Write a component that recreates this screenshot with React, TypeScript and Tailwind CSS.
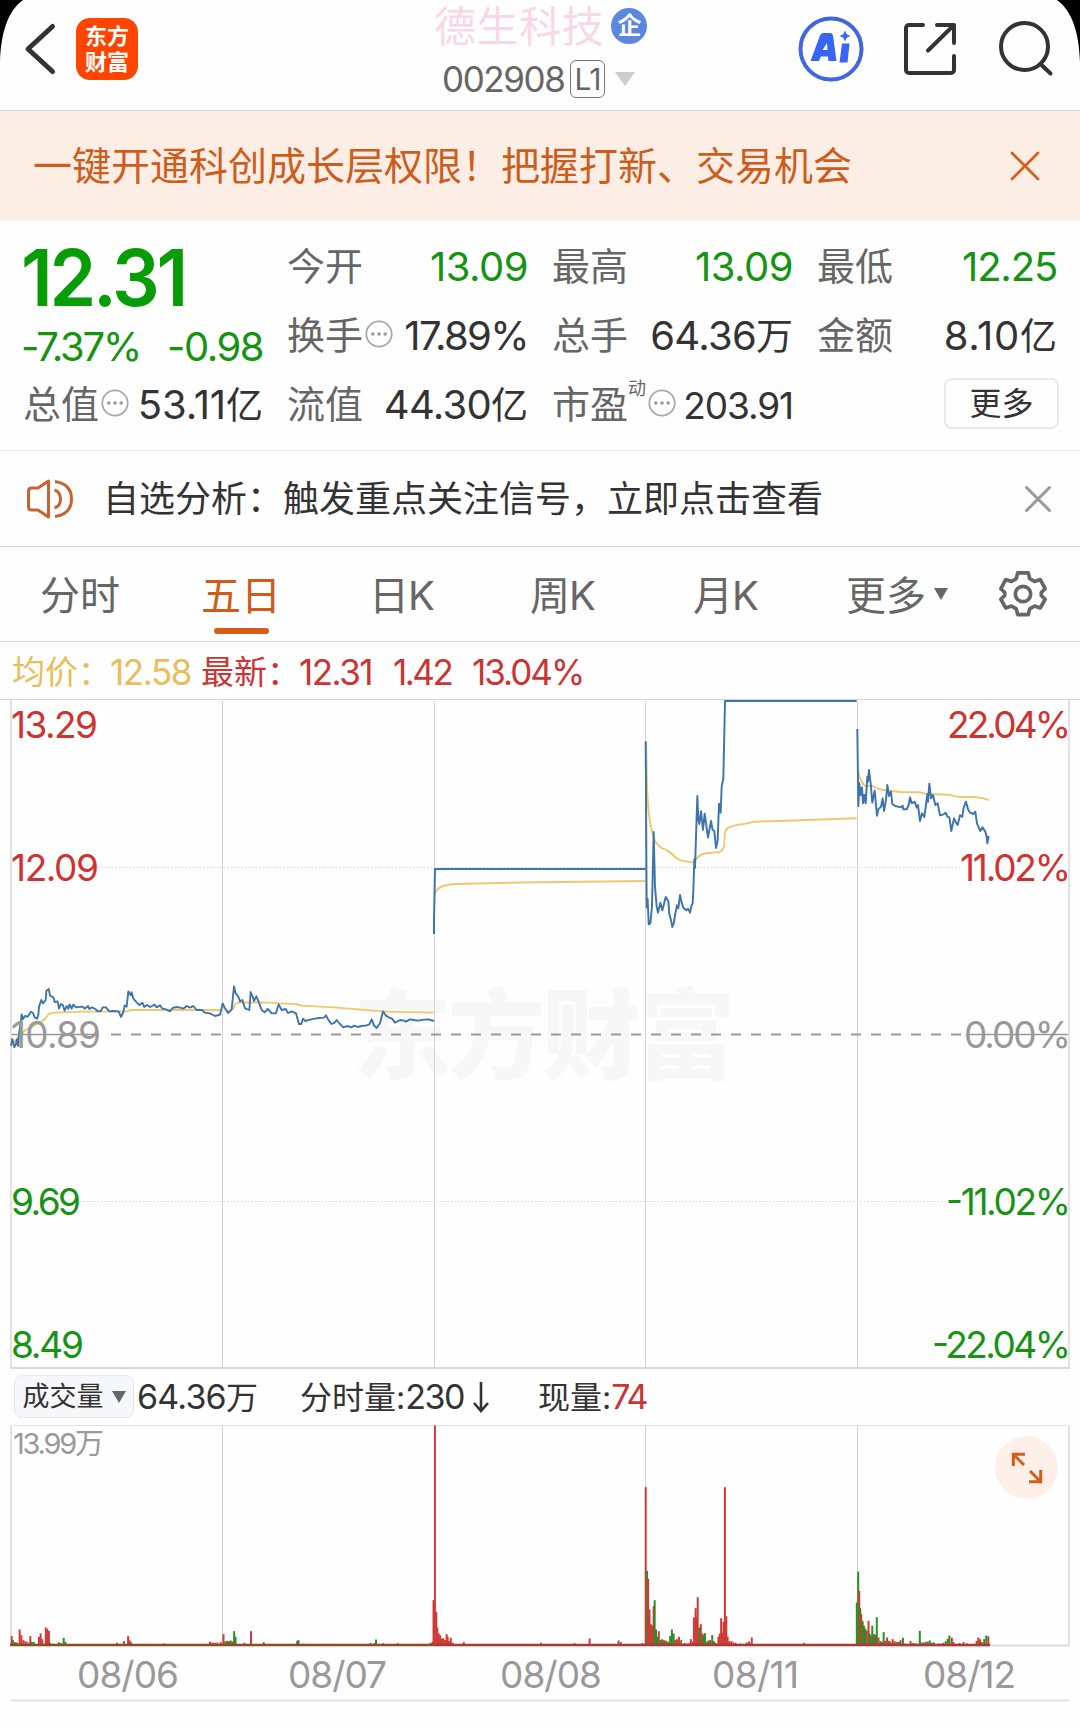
import type { ReactNode } from 'react'

const UP = '#d03230'
const DOWN = '#159312'
const LINE = '#3c74ab'
const AVG = '#f0c76b'

const dayLines = [222.5, 434.5, 645.5, 857.5]

// [x, top, color] in chart units, the baseline sits at 915
type Bar = [number, number, 'r' | 'g']

const volumeLeft: Bar[] = [
  [34, 888, 'r'], [38, 900, 'g'], [44, 906, 'g'], [49, 907, 'g'], [57, 868, 'r'], [62, 885, 'r'], [68, 900, 'r'], [74, 903, 'r'],
  [80, 906, 'r'], [88, 888, 'r'], [92, 905, 'g'], [98, 905, 'g'], [113, 890, 'r'], [118, 880, 'r'], [123, 897, 'r'],
  [133, 862, 'r'], [137, 866, 'r'], [142, 872, 'r'], [146, 908, 'g'], [157, 911, 'g'], [171, 906, 'g'], [178, 909, 'g'],
  [185, 893, 'g'], [190, 905, 'g'], [340, 908, 'r'], [350, 911, 'r'], [360, 903, 'r'], [372, 888, 'r'], [377, 901, 'r'],
  [381, 907, 'r'], [476, 910, 'r'], [610, 905, 'r'], [617, 907, 'r'], [624, 908, 'r'], [631, 907, 'r'], [641, 906, 'r'],
  [649, 882, 'r'], [654, 904, 'g'], [659, 902, 'g'], [665, 903, 'r'], [670, 901, 'g'], [675, 904, 'r'], [680, 873, 'g'],
  [684, 890, 'g'], [710, 908, 'g'], [729, 873, 'r'], [766, 906, 'r'], [863, 902, 'g'], [867, 900, 'g'], [880, 911, 'r'],
  [952, 911, 'g'], [1076, 909, 'r'], [1088, 909, 'g'], [1092, 898, 'g'], [1113, 909, 'r'], [1155, 909, 'r'],
  [1250, 908, 'r'], [1256, 905, 'r'], [1259, 780, 'r'], [1263, 256, 'r'], [1267, 815, 'r'], [1270, 862, 'r'],
  [1274, 880, 'r'], [1278, 885, 'r'], [1283, 895, 'r'], [1287, 894, 'r'], [1292, 900, 'r'], [1297, 882, 'r'],
  [1300, 890, 'r'], [1304, 903, 'r'], [1309, 893, 'r'], [1314, 907, 'r'], [1347, 906, 'r'],
]

const volumeRight: Bar[] = [
  [3, 908, 'r'], [27, 911, 'r'], [100, 909, 'r'], [144, 895, 'r'], [228, 901, 'r'], [235, 906, 'r'], [297, 909, 'r'],
  [307, 441, 'r'], [311, 692, 'g'], [314, 716, 'r'], [318, 808, 'r'], [322, 852, 'r'], [326, 856, 'r'], [330, 798, 'r'],
  [333, 780, 'g'], [337, 868, 'g'], [341, 890, 'g'], [345, 873, 'r'], [350, 900, 'g'], [354, 897, 'g'], [360, 900, 'r'],
  [366, 902, 'r'], [372, 905, 'g'], [378, 888, 'g'], [383, 868, 'g'], [388, 880, 'g'], [393, 900, 'r'], [398, 897, 'r'],
  [404, 890, 'r'], [410, 900, 'g'], [420, 908, 'r'], [431, 909, 'r'], [438, 897, 'r'], [443, 905, 'r'], [447, 832, 'r'],
  [452, 804, 'r'], [455, 830, 'r'], [458, 771, 'r'], [462, 862, 'g'], [467, 852, 'r'], [471, 880, 'r'], [475, 884, 'g'],
  [479, 879, 'g'], [484, 905, 'g'], [489, 901, 'g'], [494, 900, 'r'], [500, 885, 'g'], [505, 903, 'g'], [510, 908, 'r'],
  [518, 890, 'r'], [522, 880, 'r'], [526, 834, 'r'], [530, 878, 'r'], [533, 845, 'r'], [537, 441, 'r'], [541, 828, 'r'],
  [545, 890, 'r'], [550, 903, 'r'], [556, 903, 'r'], [562, 907, 'r'], [568, 908, 'r'], [582, 910, 'r'], [600, 907, 'r'],
  [607, 904, 'r'], [615, 892, 'r'], [767, 908, 'r'],
  [920, 787, 'g'], [924, 694, 'g'], [927, 752, 'r'], [930, 804, 'g'], [933, 822, 'r'], [937, 843, 'g'], [941, 857, 'g'],
  [945, 866, 'g'], [949, 872, 'r'], [954, 842, 'r'], [957, 880, 'g'], [961, 886, 'g'], [965, 857, 'g'], [970, 882, 'r'],
  [974, 884, 'g'], [978, 831, 'g'], [983, 892, 'r'], [988, 903, 'g'], [993, 905, 'r'], [998, 876, 'g'], [1003, 902, 'r'],
  [1008, 892, 'r'], [1013, 902, 'g'], [1018, 905, 'r'], [1024, 897, 'r'], [1030, 903, 'r'], [1036, 905, 'g'],
  [1042, 905, 'g'], [1047, 900, 'r'], [1054, 893, 'g'], [1060, 910, 'r'], [1076, 903, 'r'], [1082, 908, 'g'],
  [1090, 909, 'r'], [1103, 872, 'g'], [1108, 907, 'g'], [1114, 907, 'r'], [1120, 905, 'r'], [1126, 904, 'g'],
  [1132, 901, 'g'], [1138, 908, 'g'], [1144, 907, 'g'], [1158, 910, 'g'], [1170, 908, 'r'], [1178, 903, 'g'],
  [1184, 896, 'g'], [1189, 886, 'g'], [1196, 893, 'r'], [1201, 906, 'r'], [1218, 909, 'r'], [1230, 906, 'r'],
  [1240, 910, 'r'], [1268, 902, 'g'], [1273, 892, 'r'], [1278, 897, 'r'], [1283, 906, 'r'], [1290, 897, 'g'],
  [1296, 886, 'g'], [1302, 889, 'r'],
]

const bars = [
  ...volumeLeft.map(([x, top, c]) => ({ x: x / 2.904, h: (916 - top) / 3, c })),
  ...volumeRight.map(([x, top, c]) => ({ x: 540 + x / 2.904, h: (916 - top) / 3, c })),
]

const scaleLabels = [
  { y: 738, left: '13.29', lw: 87, right: '22.04%', rx: 947, rw: 124, color: UP },
  { y: 881, left: '12.09', lw: 88, right: '11.02%', rx: 960, rw: 111, color: UP },
  { y: 1048, left: '10.89', lw: 90, right: '0.00%', rx: 964, rw: 107, color: '#999' },
  { y: 1215, left: '9.69', lw: 70, right: '-11.02%', rx: 946, rw: 125, color: DOWN },
  { y: 1358, left: '8.49', lw: 73, right: '-22.04%', rx: 932, rw: 139, color: DOWN },
]

const dates = [
  { x: 77, w: 102, label: '08/06' },
  { x: 288, w: 99, label: '08/07' },
  { x: 500, w: 102, label: '08/08' },
  { x: 712, w: 87, label: '08/11' },
  { x: 923, w: 93, label: '08/12' },
]

function Dots() {
  return (
    <svg className="relative -top-0.5 left-0.5 h-7 w-7 shrink-0" viewBox="0 0 28 28">
      <circle cx="14" cy="14" r="12.7" fill="none" stroke="#aaa" strokeWidth="1.8" />
      <circle cx="7.8" cy="14" r="1.8" fill="#999" />
      <circle cx="14" cy="14" r="1.8" fill="#999" />
      <circle cx="20.2" cy="14" r="1.8" fill="#999" />
    </svg>
  )
}

type StatProps = {
  label: ReactNode
  value: ReactNode
  info?: boolean
  className?: string
}

function Stat({ label, value, info, className = 'text-[#333] tracking-[-0.7px]' }: StatProps) {
  return (
    <div className="flex h-[69px] items-center whitespace-nowrap">
      <span className="-mt-0.5 text-[38px] text-[#666]">{label}</span>
      {info && <Dots />}
      <span className={`ml-auto text-[40px] ${className}`}>{value}</span>
    </div>
  )
}

function Unit({ children }: { children: string }) {
  return <span className="text-[37px] tracking-normal">{children}</span>
}

function Header() {
  return (
    <header className="relative flex h-[111px] border-b border-[#d4d4d4]">
      <svg className="ml-[23px] mt-[22px] h-[54px] w-[34px]" viewBox="0 0 34 54" fill="none" stroke="#333" strokeWidth="5" strokeLinecap="round" strokeLinejoin="round">
        <path d="M29.500 4.500L5 27l24.500 22.500" />
      </svg>
      <div className="ml-[19px] mt-[18px] flex h-[62px] w-[62px] flex-col items-center justify-center rounded-[14px] bg-[#ff4500] text-[22px] font-bold leading-[26px] text-white">
        <span>东方</span>
        <span>财富</span>
      </div>
      <div className="ml-[296px] flex w-[240px] flex-col">
        <div className="flex h-[52px] items-center gap-[7px]">
          <span className="whitespace-nowrap pt-0.5 text-[42px] leading-[52px] tracking-[0.6px] text-[#f8d8e8]">德生科技</span>
          <span className="flex h-9 w-9 shrink-0 items-center justify-center rounded-full bg-[#5b87df] text-2xl font-bold text-white">企</span>
        </div>
        <div className="flex h-[54px] items-center pl-2 text-[#666]">
          <span className="w-[122px] text-[35px] tracking-[-1.4px]">002908</span>
          <span className="ml-[6px] flex h-[38px] w-[35px] items-center justify-center rounded-md border border-[#777] text-[30px] tracking-[-1px]">L1</span>
          <svg className="ml-2.5 h-3.5 w-5" viewBox="0 0 20 14">
            <path d="M0 0h20L10 14z" fill="#ccc" />
          </svg>
        </div>
      </div>
      <svg className="ml-[124px] mt-4 h-[66px] w-[66px]" viewBox="0 0 66 66">
        <circle cx="33" cy="33" r="30.500" fill="none" stroke="#4067dc" strokeWidth="4" />
        <path d="M12.500 45L22 19.500q1-2.500 3.500-2.500h7q2 0 2.500 2.500l3.500 25.500h-8l-.6-4.500h-7L21 45zM24.500 34h5l-.5-7z" fill="#3865f6" fillRule="evenodd" />
        <path d="M44 27.500h7.500L49.500 46.500h-8zM47 14.500l1.700 3.800 3.800 1.700-3.800 1.700-1.700 3.800-1.700-3.800-3.800-1.700 3.800-1.700z" fill="#3865f6" />
      </svg>
      <svg className="ml-[38px] mt-5 h-[58px] w-[56px]" viewBox="0 0 56 58" fill="none" stroke="#333" strokeWidth="4" strokeLinecap="round" strokeLinejoin="round">
        <path d="M21 5H7a3 3 0 0 0-3 3v42a3 3 0 0 0 3 3h42a3 3 0 0 0 3-3V36M35 5h17v18M51 6L26 30.500" />
      </svg>
      <svg className="ml-10 mt-5 h-[58px] w-[58px]" viewBox="0 0 58 58" fill="none" stroke="#333" strokeWidth="4" strokeLinecap="round">
        <circle cx="26.500" cy="26.500" r="23.500" />
        <path d="M42.500 44L52.500 53.500" />
      </svg>
      {/* rounded screen corners */}
      <svg className="absolute left-0 top-0 h-16 w-6" viewBox="0 0 24 64">
        <path d="M0 0h23C8 11 1 32 0 62z" />
      </svg>
      <svg className="absolute right-0 top-0 h-16 w-6" viewBox="0 0 24 64">
        <path d="M24 0H1c15 11 22 32 23 62z" />
      </svg>
    </header>
  )
}

function Quote() {
  return (
    <section className="grid h-[230px] grid-cols-[240px_241px_241px_240px] grid-rows-[69px_69px_69px] gap-x-6 border-b border-[#ececec] pl-[23px] pt-[11px]">
      <div className="row-span-2 pt-[5px] text-[#159312]">
        <div className="-ml-0.5 h-[81px] origin-left scale-x-[.95] text-[79px] font-semibold leading-[81px] tracking-[-3.4px] text-[#089c06]">12.31</div>
        <div className="-ml-0.5 flex h-[57px] items-center justify-between text-[40px]">
          <span className="tracking-[-2.200px]">-7.37%</span>
          <span className="tracking-[-1.500px]">-0.98</span>
        </div>
      </div>
      <Stat label="今开" value="13.09" className="tracking-[-0.5px] text-[#159312]" />
      <Stat label="最高" value="13.09" className="tracking-[-0.5px] text-[#159312]" />
      <Stat label="最低" value="12.25" className="tracking-[-1.2px] text-[#159312]" />
      <Stat label="换手" value="17.89%" info className="tracking-[-1.6px] text-[#333]" />
      <Stat label="总手" value={<>64.36<Unit>万</Unit></>} />
      <Stat label="金额" value={<>8.10<Unit>亿</Unit></>} className="tracking-[0.7px] text-[#333]" />
      <Stat label="总值" value={<>53.11<Unit>亿</Unit></>} info className="tracking-[-0.1px] text-[#333]" />
      <Stat label="流值" value={<>44.30<Unit>亿</Unit></>} />
      <Stat
        label={<>市盈<span className="relative -top-[23px] text-[18px]">动</span></>}
        value={<span className="text-[37px]">203.91</span>}
        info
        className="tracking-[-1.1px] text-[#333]"
      />
      <div className="flex items-center justify-end">
        <button className="-mr-0.5 -mt-0.5 h-[51px] w-[115px] rounded-lg border-2 border-[#e9e9e9] text-[32px] text-[#333]">更多</button>
      </div>
    </section>
  )
}

function Notice() {
  return (
    <section className="flex h-24 items-center border-b border-[#d4d4d4]">
      <svg className="ml-[25px] h-[42px] w-[50px]" viewBox="0 0 50 42" fill="none" stroke="#ca6230" strokeWidth="3" strokeLinejoin="round">
        <path d="M23.500 3L13 10H6.500Q3.500 10 3.500 13v16q0 3 3 3H13l10.500 7zM29.500 12q6 2 6 9t-6 9M30 3.500Q46.500 6 46.500 21T30 38.500" />
      </svg>
      <span className="ml-[28px] whitespace-nowrap text-[36px] text-[#333]">自选分析：触发重点关注信号，立即点击查看</span>
      <svg className="ml-auto mr-7 h-7 w-7" viewBox="0 0 28 28" stroke="#999" strokeWidth="3" strokeLinecap="round">
        <path d="M2.500 2.500l23 23M25.500 2.500l-23 23" />
      </svg>
    </section>
  )
}

function Tabs() {
  return (
    <nav className="flex h-[95px] items-center whitespace-nowrap border-b border-[#d4d4d4] text-[40px] text-[#666]">
      <span className="ml-10 w-[161px] pt-[3px]">分时</span>
      <span className="relative w-[168px] pt-[3px] text-[#d05a18]">
        五日
        <span className="absolute left-[13px] top-[55px] h-1.5 w-[55px] rounded-full bg-[#d75c16]" />
      </span>
      <span className="w-[161px] pt-[3px] tracking-[-1px]">日K</span>
      <span className="w-[163px] pt-[3px] tracking-[-1px]">周K</span>
      <span className="w-[153px] pt-[3px] tracking-[-1px]">月K</span>
      <span className="pt-[3px]">更多</span>
      <svg className="ml-2 h-3 w-3.5" viewBox="0 0 14 12">
        <path d="M0 0h14L7 12z" fill="#666" />
      </svg>
      <svg className="ml-[50px] h-[50px] w-[50px]" viewBox="-1 -1 52 52" fill="none" stroke="#666" strokeWidth="3.800" strokeLinejoin="round">
        <path d="M19.500 3h11l1.500 6 5 3 6-2 5 9.500-4 4v3l4 4-5 9-6-2-5 3-1.500 6h-11L18 40.500l-5-3-6 2-5-9 4-4v-3l-4-4L7 10l6 2 5-3z" />
        <circle cx="25" cy="25" r="8" />
      </svg>
    </nav>
  )
}

function PriceChart() {
  return (
    <svg className="block h-[670px] w-full" viewBox="0 699 1080 670" fontFamily="Inter, 'Noto Sans CJK SC', sans-serif">
      <text x="353" y="1071" fontSize="98" fontWeight="900" fill="#f7f7f7" textLength="382">东方财富</text>
      <path d="M0 699.500H1080" stroke="#d4d4d4" />
      <path d="M11 700V1368M1069 700V1368" stroke="#e2e2e2" strokeWidth="2" />
      <path d="M11 1368H1070" stroke="#d8d8d8" strokeWidth="2" />
      {dayLines.map(x => (
        <path key={x} d={`M${x} 701V1368`} stroke="#d2d2d2" />
      ))}
      <path d="M98 867.500H960M80 1201.500H945" stroke="#d5d5d5" strokeDasharray="1.500 2" />

      <g fill="none" strokeLinejoin="round">
        {/* 08/06 and 08/07 */}
        <g transform="translate(0 940) scale(.33333)" strokeWidth="5.600">
          <path stroke={AVG} d="M34 312L48 300 62 282 80 268 100 258 122 246 136 236 146 222 160 218 185 217 250 215 380 214 392 210 660 210M668 200L684 214 700 205 706 192 716 188 800 187 840 190 888 192 905 197 1000 202 1120 212 1160 215 1300 218" />
          <path stroke={LINE} d="M33 318L37 297 40 308 43 322 48 310 51 298 54 318 57 280 61 255 65 223 69 238 75 228 83 230 93 215 99 219 104 232 111 236 115 225 117 200 124 180 129 190 137 180 139 153 146 147 150 167 160 172 164 186 173 184 177 206 183 192 189 196 194 212 200 198 205 206 209 193 215 206 220 194 228 202 248 200 254 206 264 198 268 207 276 202 286 207 292 213 302 214 308 202 318 202 328 214 340 213 356 214 363 231 370 216 374 196 380 200 385 154 392 166 395 157 400 176 410 187 418 195 427 188 433 201 441 195 450 201 464 194 470 202 480 196 486 205 500 209 510 214 518 204 530 201 540 203 550 206 560 198 570 203 580 198 590 210 606 210 614 218 630 220 645 228 660 224 668 190 675 205 684 219 695 209 702 139 707 160 715 170 720 184 727 180 735 205 748 210 752 156 758 170 762 183 769 169 777 188 785 210 794 217 803 207 815 220 828 220 836 193 845 210 857 207 864 219 875 214 888 220 893 238 897 252 904 252 909 236 916 243 930 239 945 236 958 234 972 233 978 226 986 241 994 252 1004 248 1010 240 1020 252 1030 262 1042 258 1055 262 1063 257 1073 261 1085 258 1100 256 1108 253 1115 238 1122 256 1130 264 1140 250 1149 214 1158 227 1166 232 1176 236 1185 248 1200 240 1212 242 1218 245 1230 238 1240 240 1255 242 1272 239 1285 238 1302 243" />
        </g>

        {/* 08/08 */}
        <path stroke={AVG} strokeWidth="1.900" d="M434.500 894C437 888 441 885 455 884L520 882.500 645 881" />
        <path stroke={LINE} strokeWidth="2" d="M434 934V920L435 869H645.500" />

        {/* 08/11 */}
        <g transform="translate(630 690) scale(.33333)" strokeWidth="5.800">
          <path stroke={AVG} d="M48 155L51 290Q55 390 68 430Q72 460 97 475Q115 480 126 492Q140 508 155 512L192 518Q204 493 228 490L268 486Q280 482 283 465Q283 428 288 420Q293 410 325 404Q350 402 370 395L470 392 680 385" />
          <path stroke={LINE} d="M47 154L50 652 53 627 56 703 61 700 66 650 71 426 75 590 80 650 84 668 91 638 97 661 107 621 115 633 118 673 123 690 127 711 132 698 135 675 141 646 145 655 150 615 155 638 160 653 169 661 174 656 180 668 185 645 188 640 190 600 193 508 195 534 202 318 205 390 208 402 213 364 219 420 224 371 234 443 243 393 248 420 253 423 258 474 263 450 267 341 272 368 275 290 280 265 285 33 680 33" />
        </g>

        {/* 08/12 */}
        <g transform="translate(840 690) scale(.33333)" strokeWidth="5.800">
          <path stroke={AVG} d="M53 240Q62 280 76 288L98 288Q110 298 132 300L180 306 240 307 262 312 325 314 350 320 405 321 430 325 446 330" />
          <path stroke={LINE} d="M52 117L55 348 58 280 62 315 66 292 69 340 73 315 77 340 82 260 84 275 87 240 92 280 97 338 104 302 111 377 115 358 123 350 128 325 132 363 138 330 142 285 147 318 153 305 157 342 166 348 182 352 188 347 190 358 200 358 206 345 210 322 215 340 224 335 230 353 234 345 240 393 246 370 253 381 262 313 264 335 268 281 273 325 279 315 286 345 293 340 300 376 311 373 317 368 322 380 328 382 334 423 342 385 348 398 353 405 360 376 367 380 371 353 378 335 384 358 390 368 400 372 406 365 411 400 416 412 421 423 427 412 436 425 440 440 442 460 446 438" />
        </g>
      </g>

      <path d="M111 1034.500H962" stroke="#9a9a9a" strokeWidth="2" strokeDasharray="10 10" />
      <path d="M12 1034.500H98M966 1034.500H1068" stroke="#999" strokeWidth="1.500" />
      {scaleLabels.map(l => (
        <g key={l.left} fontSize="37" fill={l.color}>
          <text x="11" y={l.y} textLength={l.lw}>{l.left}</text>
          <text x={l.rx} y={l.y} textLength={l.rw}>{l.right}</text>
        </g>
      ))}
    </svg>
  )
}

function VolumeChart() {
  return (
    <div className="relative">
      <svg className="block h-[280px] w-full" viewBox="0 1424 1080 280" fontFamily="Inter, 'Noto Sans CJK SC', sans-serif">
        <path d="M11 1425.500H1069" stroke="#e2e2e2" />
        <path d="M11 1425V1645M1069 1425V1645" stroke="#e2e2e2" strokeWidth="2" />
        <path d="M900 1645.500H1070" stroke="#dcdcdc" strokeWidth="2" />
        {dayLines.map(x => (
          <path key={x} d={`M${x} 1426V1645`} stroke="#d2d2d2" />
        ))}
        {bars.map((b, i) => (
          <rect key={i} x={b.x - 1} y={1645.5 - b.h} width="2" height={b.h} fill={b.c === 'r' ? '#cf3a36' : '#2a8f22'} />
        ))}
        <path d="M10 1645H434" stroke="#8f4a22" strokeWidth="2.400" />
        <path d="M434 1645H990" stroke="#ad3636" strokeWidth="2.400" />
        <text x="13" y="1454" fontSize="29" fill="#999" textLength="91">13.99万</text>
        {dates.map(d => (
          <text key={d.label} x={d.x} y="1687.500" fontSize="37" fill="#999" textLength={d.w}>{d.label}</text>
        ))}
        <path d="M11 1700.500H1069" stroke="#e4e4e4" strokeWidth="2" />
      </svg>
      <button className="absolute right-[22px] top-3 flex h-[63px] w-[63px] items-center justify-center rounded-full bg-[#fef0e8]">
        <svg className="h-8 w-8" viewBox="0 0 32 32" fill="none" stroke="#d75c16" strokeWidth="3">
          <path d="M14 2.300H2.300V14M2.500 2.500L13 13M18 29.700h11.700V18M29.500 29.500L19 19" />
        </svg>
      </button>
    </div>
  )
}

export default function App() {
  return (
    <div className="h-[1728px] w-[1080px] overflow-hidden bg-[#fefefe] font-[Inter,'Noto_Sans_CJK_SC',sans-serif] leading-none">
      <Header />

      <div className="flex h-[110px] items-center justify-between bg-[#fceee5] pl-[33px] pr-[40px] text-[#cd5d1c]">
        <span className="whitespace-nowrap pb-0.5 text-[39px]">一键开通科创成长层权限！把握打新、交易机会</span>
        <svg className="h-[30px] w-[30px]" viewBox="0 0 30 30" stroke="#d4601f" strokeWidth="2.800" strokeLinecap="round">
          <path d="M2 2l26 26M28 2L2 28" />
        </svg>
      </div>

      <Quote />
      <Notice />
      <Tabs />

      <div className="flex h-[57px] items-center whitespace-nowrap pl-3 pt-1 text-[33px] text-[#cb3432]">
        <span className="w-[98px] text-[#e9bc5c]">均价：</span>
        <span className="w-[91px] text-[35px] tracking-[-1.4px] text-[#e9bc5c]">12.58</span>
        <span className="w-[98px]">最新：</span>
        <span className="w-[94px] text-[35px] tracking-[-1.5px]">12.31</span>
        <span className="w-[79px] text-[35px] tracking-[-2.5px]">1.42</span>
        <span className="text-[35px] tracking-[-2px]">13.04%</span>
      </div>

      <PriceChart />

      <div className="flex h-[55px] items-center whitespace-nowrap pl-3.5 text-[32px] text-[#333]">
        <button className="flex h-[43px] w-[120px] shrink-0 items-center justify-center gap-2 rounded-lg border border-[#e6e8ec] bg-[#f6f7fa] text-[27px]">
          成交量
          <svg className="h-3 w-3.5" viewBox="0 0 14 12">
            <path d="M0 0h14L7 12z" fill="#666" />
          </svg>
        </button>
        <span className="ml-[3px] w-[163px]"><span className="text-[34px] tracking-[-0.8px]">64.36</span>万</span>
        <span className="w-[173px]">分时量:<span className="text-[34px] tracking-[-1.5px]">230</span></span>
        <svg className="h-8 w-4" viewBox="0 0 16 32" fill="none" stroke="#333" strokeWidth="2.600">
          <path d="M8 1v28M1 22l7 8 7-8" />
        </svg>
        <span className="ml-[49px]">现量:<span className="text-[34px] tracking-[-2px] text-[#cb3432]">74</span></span>
      </div>

      <VolumeChart />
    </div>
  )
}
